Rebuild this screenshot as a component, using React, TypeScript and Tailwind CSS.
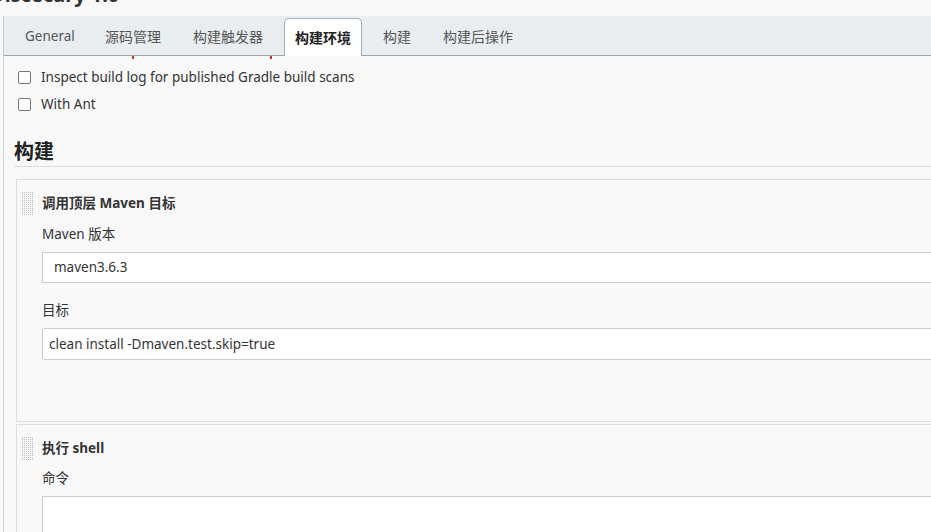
import React from 'react';

// tab label + fixed width so labels sit where the reference has them
const tabs: { label: string; cls: string }[] = [
  { label: 'General', cls: 'w-[80px]' },
  { label: '源码管理', cls: 'w-[88px]' },
  { label: '构建触发器', cls: 'w-[107px]' },
  { label: '构建环境', cls: '' },
  { label: '构建', cls: 'w-[60px]' },
  { label: '构建后操作', cls: 'w-[100px]' },
];
const activeTab = '构建环境';

// dotted drag handle on the left of each build step
const DragHandle: React.FC = () => (
  <svg width="12" height="24" className="shrink-0">
    <defs>
      <pattern id="dots" width="2" height="2" patternUnits="userSpaceOnUse">
        <rect x="0" y="0" width="1" height="1" fill="#b8b8b8" />
      </pattern>
    </defs>
    <rect x="0" y="0" width="12" height="24" fill="url(#dots)" />
  </svg>
);

const Checkbox: React.FC<{ label: string }> = ({ label }) => (
  <label className="flex items-center h-[27px] gap-[10px]">
    <span className="w-[13px] h-[13px] border border-[#767676] rounded-[2px] bg-white shrink-0" />
    <span className="text-[13.5px] text-[#333]">{label}</span>
  </label>
);

const App: React.FC = () => {
  return (
    <div className="h-[532px] w-[931px] overflow-hidden bg-[#f8f8f8] text-[#333] font-['Noto_Sans','Noto_Sans_CJK_SC',sans-serif]">
      {/* page title, mostly scrolled off */}
      <div className="h-[16px] overflow-hidden">
        <h1 className="text-[20px] font-bold leading-[20px] -ml-[10px] -mt-[15px] whitespace-nowrap">Discecary 1.0</h1>
      </div>

      {/* tab bar */}
      <div className="ml-[3px] h-[40px] bg-[#e9edf0] border-l border-[#c9d0d4] border-b border-b-[#9ca6ab] flex items-end pl-[5px]">
        {tabs.map(t =>
          t.label === activeTab ? (
            <div
              key={t.label}
              className="h-[38px] -mb-px w-[78px] shrink-0 justify-center flex items-center bg-white border border-b-0 border-[#a3adb2] rounded-t-[5px] text-[14px] font-bold text-[#222] mr-[5px]"
            >
              {t.label}
            </div>
          ) : (
            <div key={t.label} className={`${t.cls} h-[38px] pl-4 flex items-center text-[14px] text-[#555] shrink-0`}>
              <span className={t.label === 'General' ? 'text-[13.5px]' : ''}>{t.label}</span>
            </div>
          )
        )}
      </div>

      {/* config content */}
      <div className="ml-[3px] border-l border-[#cfcfcf] pb-10">
        {/* tail of a previous option, scrolled away */}
        <div className="flex h-[4px] pl-[128px] gap-[136px]">
          <span className="w-[2px] h-[3px] bg-[#c0392b]" />
          <span className="w-[2px] h-[3px] bg-[#c0392b]" />
        </div>

        <div className="pl-[14px] pt-[4px]">
          <Checkbox label="Inspect build log for published Gradle build scans" />
          <Checkbox label="With Ant" />
        </div>

        <div className="ml-[10px] mt-[21px] border-b border-[#ddd] pb-[1px]">
          <h2 className="text-[20px] font-bold leading-[26px] text-[#222]">构建</h2>
        </div>

        {/* build step: maven */}
        <div className="ml-[12px] mt-[12px] w-[1000px] h-[243px] border border-[#ddd] bg-[#f8f8f8] pt-[12px] pl-[5px]">
          <div className="flex items-start gap-[8px]">
            <DragHandle />
            <div className="flex-1">
              <div className="text-[13.5px] font-bold leading-[22px]">调用顶层 Maven 目标</div>
              <div className="text-[13.5px] leading-[20px] mt-[10px]">Maven 版本</div>
              <div className="mt-[8px] h-[31px] bg-white border border-[#ccc] flex items-center pl-[11px] text-[13.5px]">
                maven3.6.3
              </div>
              <div className="text-[13.5px] leading-[20px] mt-[17px]">目标</div>
              <div className="mt-[8px] h-[32px] bg-white border border-[#ccc] rounded-[3px] flex items-center pl-[6px] text-[13.5px]">
                clean install -Dmaven.test.skip=true
              </div>
            </div>
          </div>
        </div>

        {/* build step: shell */}
        <div className="ml-[12px] mt-[2px] w-[1000px] h-[200px] border border-[#ddd] bg-[#f8f8f8] pt-[12px] pl-[5px]">
          <div className="flex items-start gap-[8px]">
            <DragHandle />
            <div className="flex-1">
              <div className="text-[13.5px] font-bold leading-[22px]">执行 shell</div>
              <div className="text-[13.5px] leading-[20px] mt-[9px]">命令</div>
              <div className="mt-[8px] h-[100px] bg-white border border-[#ccc]" />
            </div>
          </div>
        </div>
      </div>
    </div>
  );
};

export default App;
